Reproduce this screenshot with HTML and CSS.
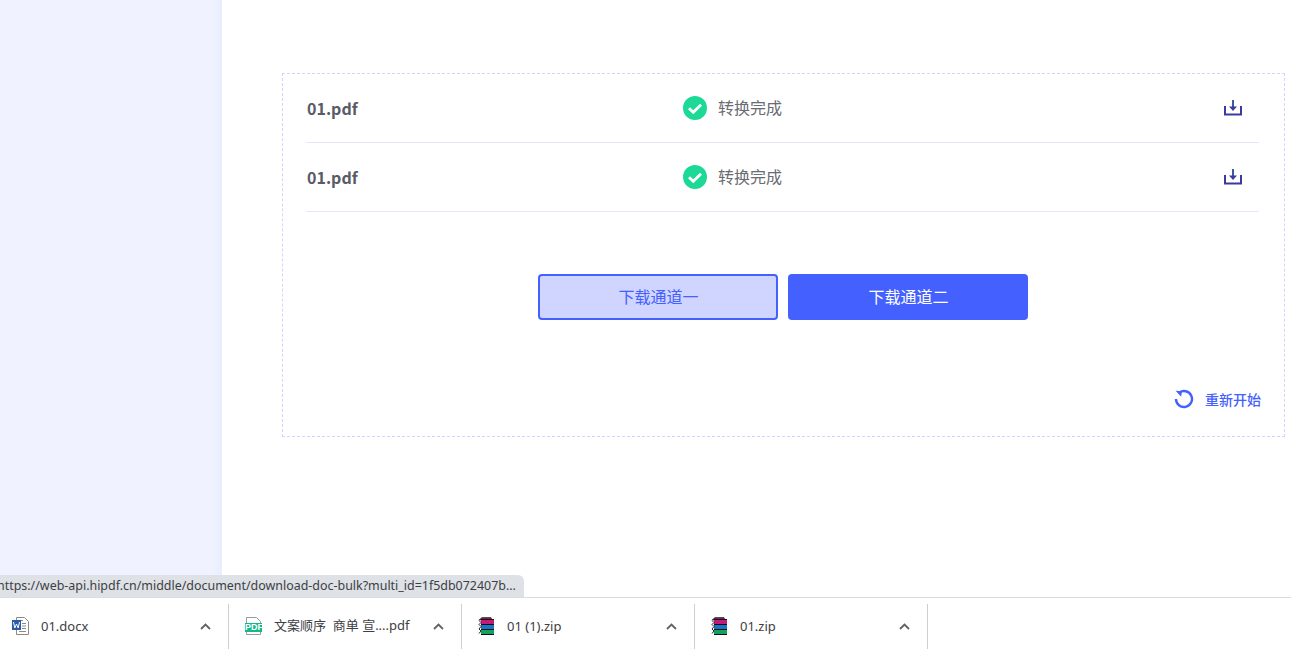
FILE: index.html
```html
<!DOCTYPE html>
<html lang="zh-CN">
<head>
<meta charset="utf-8">
<title>下载</title>
<link rel="stylesheet" href="styles.css">
</head>
<body>
<div class="page">
  <aside class="sidebar"></aside>
  <main class="content">
    <section class="panel">
      <div class="row">
        <div class="name">01.pdf</div>
        <div class="status">
          <svg class="check" viewBox="0 0 24 24"><circle cx="12" cy="12" r="12" fill="#1cd997"/><path d="M6 12.200l4.300 4.100 7.700-7.500" fill="none" stroke="#fff" stroke-width="2.800"/></svg>
          <span>转换完成</span>
        </div>
        <svg class="dl" viewBox="0 0 18 17"><path d="M1 7v8.500h16V7" fill="none" stroke="#3d3a9e" stroke-width="2"/><path d="M9 1v9" stroke="#3d5a9e" stroke-width="2"/><path d="M5 7.500h8L9 12z" fill="#3d3a9e"/></svg>
      </div>
      <div class="row">
        <div class="name">01.pdf</div>
        <div class="status">
          <svg class="check" viewBox="0 0 24 24"><circle cx="12" cy="12" r="12" fill="#1cd997"/><path d="M6 12.200l4.300 4.100 7.700-7.500" fill="none" stroke="#fff" stroke-width="2.800"/></svg>
          <span>转换完成</span>
        </div>
        <svg class="dl" viewBox="0 0 18 17"><path d="M1 7v8.500h16V7" fill="none" stroke="#3d3a9e" stroke-width="2"/><path d="M9 1v9" stroke="#3d5a9e" stroke-width="2"/><path d="M5 7.500h8L9 12z" fill="#3d3a9e"/></svg>
      </div>
      <div class="actions">
        <button class="btn btn-light">下载通道一</button>
        <button class="btn btn-solid">下载通道二</button>
      </div>
      <div class="restart">
        <svg class="redo" viewBox="0 0 20 20"><path d="M5.200 3.600A8 8 0 1 1 2 10" fill="none" stroke="#4460ff" stroke-width="2.400"/><path d="M1.600 1.800l6.400.4-.9 5.600z" fill="#4460ff"/></svg>
        <span>重新开始</span>
      </div>
    </section>
  </main>
  <div class="link-tip"><span>https://web-api.hipdf.cn/middle/document/download-doc-bulk?multi_id=1f5db072407b...</span></div>
</div>
<footer class="shelf">
  <div class="item item-1">
    <svg class="file" viewBox="0 0 17 18"><path d="M4.500 .5h8l4 4v13h-12z" fill="#fff" stroke="#8a8a8a"/><path d="M7 3.500h4M10 6.500h4M10 9h4M10 11.500h4M7 14.500h7" stroke="#8a8a8a"/><rect x="0" y="3" width="9" height="10" fill="#2b5aa8"/><path d="M1.500 5l1.300 6 1.700-4 1.700 4 1.300-6" fill="none" stroke="#fff"/></svg>
    <span class="fname">01.docx</span>
    <svg class="chev" viewBox="0 0 11 7"><path d="M1 6l4.500-4.500L10 6" fill="none" stroke="#5f6368" stroke-width="1.800"/></svg>
  </div>
  <div class="item item-2">
    <svg class="file" viewBox="0 0 17 18"><path d="M1.500 6V.5h10l4 4V6M1.500 15v2.500h14V15" fill="#fff" stroke="#9a9a9a"/><rect x="0" y="6" width="17" height="9" fill="#13b98b"/></svg>
    <span class="pdf-tag">PDF</span>
    <span class="fname">文案顺序&nbsp; 商单 宣....pdf</span>
    <svg class="chev" viewBox="0 0 11 7"><path d="M1 6l4.500-4.500L10 6" fill="none" stroke="#5f6368" stroke-width="1.800"/></svg>
  </div>
  <div class="item item-3">
    <svg class="file" viewBox="0 0 17 18"><path d="M1 3l3-2.500h9l1 2.500z" fill="#7c1f4e" stroke="#222" stroke-width=".6"/><path d="M3 3h13v4H3z" fill="#c41a78"/><path d="M3 8h13v4H3z" fill="#1876c9"/><path d="M3 13h13v4H3z" fill="#14a060"/><path d="M3 2.500h13M3 7.500h13M3 12.500h13M3 17.500h13" stroke="#111"/><path d="M1 3.500l2 2-2 2 2 2-2 2.500 2 2-2 2.500" fill="none" stroke="#222"/></svg>
    <span class="fname">01 (1).zip</span>
    <svg class="chev" viewBox="0 0 11 7"><path d="M1 6l4.500-4.500L10 6" fill="none" stroke="#5f6368" stroke-width="1.800"/></svg>
  </div>
  <div class="item item-3">
    <svg class="file" viewBox="0 0 17 18"><path d="M1 3l3-2.500h9l1 2.500z" fill="#7c1f4e" stroke="#222" stroke-width=".6"/><path d="M3 3h13v4H3z" fill="#c41a78"/><path d="M3 8h13v4H3z" fill="#1876c9"/><path d="M3 13h13v4H3z" fill="#14a060"/><path d="M3 2.500h13M3 7.500h13M3 12.500h13M3 17.500h13" stroke="#111"/><path d="M1 3.500l2 2-2 2 2 2-2 2.500 2 2-2 2.500" fill="none" stroke="#222"/></svg>
    <span class="fname">01.zip</span>
    <svg class="chev" viewBox="0 0 11 7"><path d="M1 6l4.500-4.500L10 6" fill="none" stroke="#5f6368" stroke-width="1.800"/></svg>
  </div>
</footer>
</body>
</html>
```
FILE: styles.css
```css
* { box-sizing: border-box; }
html, body { margin: 0; height: 100%; overflow: hidden; background: #fff; }
body {
  display: flex;
  flex-direction: column;
  height: 649px;
  font-family: "Noto Sans", "Noto Sans CJK SC", sans-serif;
}
.page { position: relative; flex: 1; display: flex; min-height: 0; }
.sidebar {
  width: 222px;
  flex: none;
  background: linear-gradient(to right, #f0f3ff 0, #f0f3ff 212px, #e9ecfd 222px);
}
.content { flex: 1; padding: 73px 6px 0 60px; }
.panel {
  height: 364px;
  border: 1px dashed #d3d3fb;
  padding: 0 25px 0 23px;
  display: flex;
  flex-direction: column;
}
.row {
  height: 69px;
  flex: none;
  display: grid;
  grid-template-columns: 377px 1fr 35px;
  align-items: center;
  border-bottom: 1px solid #e6e6fa;
  padding-bottom: 1px;
}
.name { font: 700 16px "Noto Sans CJK SC", sans-serif; color: #595b66; padding-left: 1px; }
.status { display: flex; align-items: center; gap: 11px; font: 400 16px "Noto Sans CJK SC", sans-serif; color: #6b6b73; }
.status span { position: relative; top: -1px; }
.check { width: 24px; height: 24px; display: block; flex: none; }
.dl { width: 18px; height: 17px; display: block; }
.actions { display: flex; justify-content: center; gap: 10px; margin-top: 62px; }
.btn {
  width: 240px;
  height: 46px;
  border-radius: 4px;
  font: 400 16px "Noto Sans CJK SC", sans-serif;
  padding: 0 0 2px 2px;
}
.btn-light { background: #d0d5ff; border: 2px solid #4460ff; color: #4460ff; }
.btn-solid { background: #4460ff; border: 0; color: #fff; }
.restart {
  display: flex;
  justify-content: flex-end;
  align-items: center;
  gap: 11px;
  margin-top: 69px;
  margin-right: -2px;
  font: 500 14px "Noto Sans CJK SC", sans-serif;
  color: #4460ff;
}
.redo { width: 20px; height: 20px; display: block; }
.link-tip {
  position: absolute;
  left: 0;
  bottom: 0;
  width: 524px;
  height: 22px;
  background: #dee1e6;
  border-top-right-radius: 6px;
  overflow: hidden;
  white-space: nowrap;
  font-size: 12.450px;
  line-height: 22px;
  color: #3c4043;
  text-indent: -3px;
}
.shelf {
  height: 52px;
  flex: none;
  border-top: 1px solid #dadce0;
  background: #fff;
  display: flex;
  padding-top: 6px;
  font-size: 13px;
  color: #3c4043;
}
.item {
  position: relative;
  height: 46px;
  width: 233px;
  flex: none;
  display: flex;
  align-items: center;
  border-right: 1px solid #cfcfcf;
  padding: 0 17px 2px 13px;
}
.item-1 { width: 229px; padding-left: 12px; }
.item-2 { padding-left: 16px; }
.item-3 { padding-left: 16px; }
.file { width: 17px; height: 18px; flex: none; display: block; }
.fname { margin-left: 12px; flex: 1; white-space: nowrap; line-height: 18px; }
.item-2 .fname { padding-bottom: 2px; }
.chev { width: 11px; height: 7px; flex: none; display: block; }
.pdf-tag {
  position: absolute;
  left: 16px;
  top: 19px;
  width: 17px;
  text-align: center;
  font: 700 9px/9px "Liberation Sans", sans-serif;
  color: #fff;
}
```
